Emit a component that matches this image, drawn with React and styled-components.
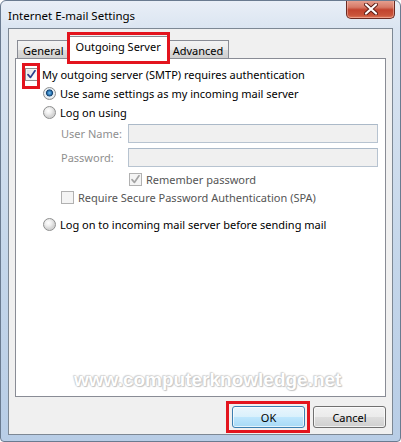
import React from "react";
import styled, { createGlobalStyle, css } from "styled-components";

const Global = createGlobalStyle`
  html, body { margin: 0; padding: 0; background: #ffffff; }
  body { font-family: "Noto Sans", "Open Sans", sans-serif; font-size: 11px; color: #000; }
  * { box-sizing: border-box; }
`;

const Window = styled.div`
  position: relative;
  width: 401px;
  height: 442px;
  display: flex;
  flex-direction: column;
  padding: 0 7px 6px 7px;
  border: 1px solid #6a7b90;
  border-radius: 6px 6px 4px 4px;
  background: linear-gradient(to bottom, #e9eff7 0px, #dbe5f1 27px, #c4d6ea 60%, #b8cde6 100%);
  overflow: hidden;
`;

const TitleBar = styled.div`
  height: 27px;
  display: flex;
  align-items: center;
  padding-top: 2px;
  flex: none;
`;

const Title = styled.span`
  font-size: 11.5px;
  color: #000;
  text-shadow: 0 0 6px rgba(255, 255, 255, 0.9);
`;

const CloseButton = styled.div`
  position: absolute;
  top: -1px;
  right: 5px;
  width: 49px;
  height: 19px;
  border: 1px solid #6b2a22;
  border-top: none;
  border-radius: 0 0 5px 5px;
  background: linear-gradient(to bottom, #e8a494 0%, #d77a67 40%, #c2432e 55%, #c9543a 85%, #e07a5c 100%);
  box-shadow: inset 0 0 0 1px rgba(255, 210, 200, 0.45);
  display: flex;
  align-items: center;
  justify-content: center;
`;

const Client = styled.div`
  flex: 1;
  display: flex;
  flex-direction: column;
  background: #f0f0f0;
  border: 1px solid #7d8894;
  padding: 0 6px;
`;

const TabRow = styled.div`
  display: flex;
  align-items: flex-end;
  height: 29px;
  padding-left: 2px;
  position: relative;
  z-index: 2;
`;

const Tab = styled.div`
  position: relative;
  display: flex;
  align-items: center;
  justify-content: center;
  font-size: 11px;
  border: 1px solid #898c95;
  border-bottom: none;
  padding: 0 5px;
  ${(p) =>
    p.$active
      ? css`
          height: 23px;
          margin-bottom: -1px;
          background: #ffffff;
          padding: 0 6px 3px;
          margin-left: -1px;
          margin-right: -1px;
        `
      : css`
          height: 18px;
          background: linear-gradient(to bottom, #f3f3f3 0%, #ebebeb 50%, #dddddd 51%, #cfcfcf 100%);
          padding-top: 1px;
        `}
`;

const Highlight = styled.div`
  position: absolute;
  border: 3px solid #e3141e;
  pointer-events: none;
  z-index: 5;
  top: ${(p) => p.$t}px;
  left: ${(p) => p.$l}px;
  right: ${(p) => p.$r}px;
  bottom: ${(p) => p.$b}px;
`;

const Panel = styled.div`
  position: relative;
  height: 339px;
  flex: none;
  background: #ffffff;
  border: 1px solid #898c95;
  padding: 6px 7px 0 9px;
  display: flex;
  flex-direction: column;
`;

const Row = styled.div`
  display: flex;
  align-items: center;
  height: ${(p) => p.$h || 19}px;
  padding-left: ${(p) => p.$indent || 0}px;
  margin-top: ${(p) => p.$mt || 0}px;
  gap: ${(p) => (p.$gap != null ? p.$gap : 4)}px;
  color: ${(p) => (p.$muted ? "#555" : "#000")};
`;

const BoxWrap = styled.span`
  position: relative;
  display: inline-flex;
  flex: none;
`;

const Box = styled.span`
  width: 13px;
  height: 13px;
  flex: none;
  display: inline-flex;
  align-items: center;
  justify-content: center;
  border: 1px solid ${(p) => (p.$disabled ? "#b1b1b1" : "#8e8f8f")};
  background: ${(p) =>
    p.$disabled ? "#f4f4f4" : "linear-gradient(135deg, #dcdcdc 0%, #f6f6f6 60%, #ffffff 100%)"};
  box-shadow: inset 0 0 0 1px #f4f4f4;
`;

const Radio = styled.span`
  width: 13px;
  height: 13px;
  flex: none;
  border-radius: 50%;
  border: 1px solid #8e8f8f;
  background: ${(p) =>
    p.$checked
      ? "radial-gradient(circle at 50% 45%, #7fc2ee 0px, #2a78b8 2px, #17406a 3.2px, #d7e4ef 3.8px, #eef3f7 5px, #d9d9d9 6px)"
      : "radial-gradient(circle at 40% 35%, #ffffff 0px, #efefef 3px, #d4d4d4 6px)"};
`;

const FieldLabel = styled.span`
  width: 67px;
  flex: none;
  color: #8f8f8f;
`;

const Field = styled.div`
  width: 251px;
  height: 19px;
  background: #f0f0f0;
  border: 1px solid #b7c3d0;
  border-top-color: #abb9c8;
`;

const Watermark = styled.div`
  position: absolute;
  left: 58px;
  top: 310px;
  font-family: "Liberation Sans", Arial, sans-serif;
  font-weight: bold;
  font-size: 19px;
  color: #ffffff;
  text-shadow: 0 0 1px #b9b9b9, 0 0 2px #c6c6c6, 1px 1px 1px #c9c9c9, -1px -1px 1px #dedede;
  pointer-events: none;
`;

const ButtonRow = styled.div`
  display: flex;
  justify-content: flex-end;
  gap: 8px;
  padding-top: 9px;
`;

const Button = styled.div`
  position: relative;
  width: 73px;
  height: 22px;
  display: flex;
  align-items: center;
  justify-content: center;
  border-radius: 3px;
  font-size: 11px;
  border: 1px solid ${(p) => (p.$default ? "#3c7fb1" : "#707070")};
  background: ${(p) =>
    p.$default
      ? "linear-gradient(to bottom, #eaf6fd 0%, #d9f0fc 50%, #bee6fd 51%, #a7d9f5 100%)"
      : "linear-gradient(to bottom, #f2f2f2 0%, #ebebeb 50%, #dddddd 51%, #cfcfcf 100%)"};
  box-shadow: inset 0 0 0 1px rgba(255, 255, 255, 0.7);
`;

const Check = ({ disabled }) => (
  <svg width="9" height="9" viewBox="0 0 9 9">
    <path
      d="M1 4.6 L3.4 7.4 L8 0.8"
      fill="none"
      stroke={disabled ? "#a4a4a4" : "#2c3f8c"}
      strokeWidth="1.7"
      strokeLinecap="round"
      strokeLinejoin="round"
    />
  </svg>
);

const CloseX = () => (
  <svg width="14" height="12" viewBox="0 0 14 12">
    <path d="M2 1.5 L12 10.5 M12 1.5 L2 10.5" stroke="#5a1b14" strokeWidth="4" strokeLinecap="round" />
    <path d="M2 1.5 L12 10.5 M12 1.5 L2 10.5" stroke="#ffffff" strokeWidth="2.2" strokeLinecap="round" />
  </svg>
);

export default function App() {
  return (
    <>
      <Global />
      <Window>
        <TitleBar>
          <Title>Internet E-mail Settings</Title>
        </TitleBar>
        <CloseButton>
          <CloseX />
        </CloseButton>
        <Client>
          <TabRow>
            <Tab>General</Tab>
            <Tab $active>
              Outgoing Server
              <Highlight $t={-5} $l={-3} $r={-3} $b={-5} />
            </Tab>
            <Tab>Advanced</Tab>
          </TabRow>
          <Panel>
            <Row>
              <BoxWrap>
                <Box>
                  <Check />
                </Box>
                <Highlight $t={-5} $l={-3} $r={-2} $b={-8} />
              </BoxWrap>
              My outgoing server (SMTP) requires authentication
            </Row>
            <Row $indent={18}>
              <Radio $checked />
              Use same settings as my incoming mail server
            </Row>
            <Row $indent={18}>
              <Radio />
              Log on using
            </Row>
            <Row $indent={36} $mt={2} $gap={0}>
              <FieldLabel>User Name:</FieldLabel>
              <Field />
            </Row>
            <Row $indent={36} $mt={5} $gap={0}>
              <FieldLabel>Password:</FieldLabel>
              <Field />
            </Row>
            <Row $indent={104} $mt={3} $h={18} $muted>
              <Box $disabled>
                <Check disabled />
              </Box>
              Remember password
            </Row>
            <Row $indent={36} $h={18} $muted>
              <Box $disabled />
              Require Secure Password Authentication (SPA)
            </Row>
            <Row $indent={18} $mt={9}>
              <Radio />
              Log on to incoming mail server before sending mail
            </Row>
            <Watermark>www.computerknowledge.net</Watermark>
          </Panel>
          <ButtonRow>
            <Button $default>
              OK
              <Highlight $t={-6} $l={-7} $r={-6} $b={-6} />
            </Button>
            <Button>Cancel</Button>
          </ButtonRow>
        </Client>
      </Window>
    </>
  );
}
